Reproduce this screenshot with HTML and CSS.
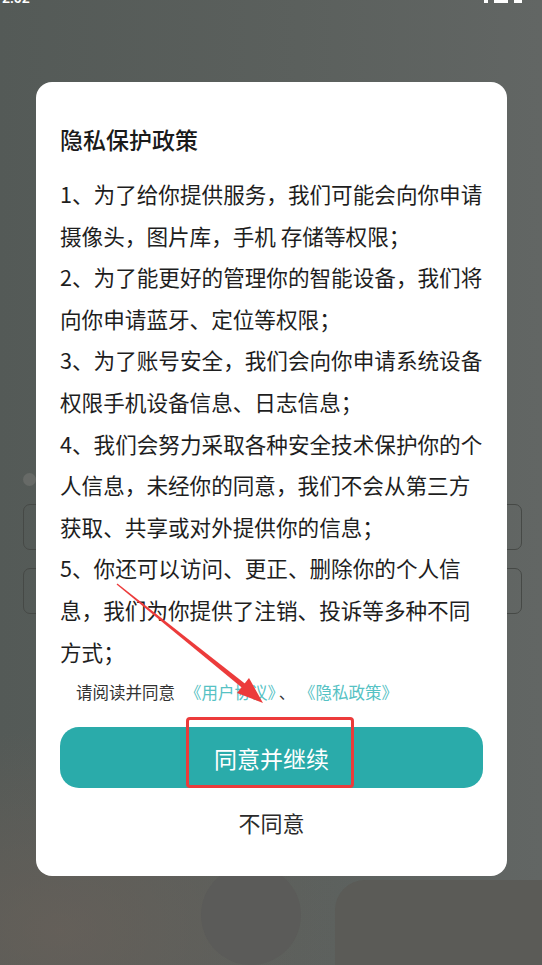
FILE: index.html
```html
<!DOCTYPE html>
<html lang="zh-CN">
<head>
<meta charset="utf-8">
<title>隐私保护政策</title>
<link rel="stylesheet" href="styles.css">
</head>
<body>
<div class="page">
  <div class="status">
    <div class="status-inner">
      <span class="time">2:02</span>
      <span class="icons"><i class="bar b1"></i><i class="bar b2"></i><i class="bat"></i></span>
    </div>
  </div>
  <div class="bg-content">
    <div class="dot"></div>
    <div class="field f1"></div>
    <div class="field f2"></div>
    <div class="bottom-row">
      <div class="round"></div>
    </div>
  </div>
  <div class="bg-shape"></div>

  <div class="modal">
    <h1 class="title">隐私保护政策</h1>
    <div class="body">
      <p>1、为了给你提供服务，我们可能会向你申请<br>摄像头，图片库，手机 存储等权限；</p>
      <p>2、为了能更好的管理你的智能设备，我们将<br>向你申请蓝牙、定位等权限；</p>
      <p>3、为了账号安全，我们会向你申请系统设备<br>权限手机设备信息、日志信息；</p>
      <p>4、我们会努力采取各种安全技术保护你的个<br>人信息，未经你的同意，我们不会从第三方<br>获取、共享或对外提供你的信息；</p>
      <p>5、你还可以访问、更正、删除你的个人信<br>息，我们为你提供了注销、投诉等多种不同<br>方式；</p>
    </div>
    <div class="agree">请阅读并同意<span class="link l1">《用户协议》</span><span class="sep">、</span><span class="link">《隐私政策》</span></div>
    <button class="btn-primary">同意并继续</button>
    <div class="btn-text">不同意</div>
  </div>

  <div class="mark-box"></div>
  <svg class="mark-arrow" width="542" height="965" viewBox="0 0 542 965">
    <polygon points="116.6,584.6 244.8,689.9 248.0,686.0 117.4,583.6" fill="#ec3b3b"/>
    <polygon points="263,703 237.0,693.0 249.0,678.0" fill="#ec3b3b"/>
  </svg>
</div>
</body>
</html>
```

FILE: styles.css
```css
* { box-sizing: border-box; margin: 0; padding: 0; }
html, body { width: 542px; height: 965px; overflow: hidden; }
body {
  font-family: "Noto Sans CJK SC", "Noto Sans", sans-serif;
  background: #5a5e5b;
}
.page {
  position: relative;
  width: 542px;
  height: 965px;
  overflow: hidden;
  background:
    radial-gradient(ellipse 300px 200px at 60px 930px, rgba(110,98,90,0.6), rgba(110,98,90,0) 100%),
    linear-gradient(90deg, #545a57 0%, #5b605d 55%, #626664 100%);
}
.status { height: 3px; overflow: hidden; }
.status-inner {
  display: flex;
  justify-content: space-between;
  align-items: flex-end;
  height: 3px;
  padding: 0 20px 0 2px;
}
.time { color: #fff; font: 600 14px/14px "Roboto", sans-serif; margin-bottom: -2px; }
.icons { display: flex; gap: 6px; align-items: flex-end; }
.bar { display: block; width: 4px; height: 3px; background: #fff; }
.bar.b2 { width: 14px; }
.bat { display: block; width: 8px; height: 3px; background: #fff; }

.bg-content {
  display: flex;
  flex-direction: column;
  padding: 0 20px 0 23px;
}
.dot {
  width: 13px; height: 13px; border-radius: 50%;
  background: #676a67;
  margin-top: 470px;
}
.field {
  height: 46px;
  border: 1px solid #464946;
  border-radius: 7px;
}
.f1 { margin-top: 18px; }
.f2 { margin-top: 18px; }
.bottom-row { display: flex; padding-left: 178px; margin-top: 251px; }
.round {
  width: 100px; height: 100px; border-radius: 50%;
  background: #5b5b59;
}
.bg-shape {
  position: absolute;
  left: 335px; top: 880px; width: 260px; height: 120px;
  background: #5b5b57;
  border-radius: 30px 0 0 0;
}

.modal {
  position: absolute;
  left: 36px; top: 82px;
  width: 471px; height: 794px;
  background: #fff;
  border-radius: 16px;
  padding: 41px 24px 0 24px;
  display: flex;
  flex-direction: column;
}
.title {
  font-size: 23px;
  font-weight: 500;
  line-height: 32px;
  color: #1a1a1a;
}
.body {
  margin-top: 18px;
  font-size: 21.6px;
  line-height: 41.6px;
  color: #1e1e1e;
  white-space: nowrap;
}
.agree {
  margin-top: 8px;
  padding-left: 16px;
  font-size: 16.5px;
  line-height: 24px;
  color: #333;
  white-space: nowrap;
}
.link { color: #56c2c4; }
.l1 { margin-left: 10px; }
.sep { margin: 0 12px 0 3px; }
.btn-primary {
  margin-top: 23px;
  height: 61px;
  width: 100%;
  border: none;
  border-radius: 19px;
  background: #2aabaa;
  color: #fff;
  font-family: inherit;
  font-size: 23px;
}
.btn-text {
  margin-top: 19px;
  text-align: center;
  font-size: 22px;
  line-height: 30px;
  color: #2b2b2b;
}
.mark-box {
  position: absolute;
  left: 186px; top: 717px;
  width: 168px; height: 71px;
  border: 3px solid #ec3b3b;
  border-radius: 4px;
}
.mark-arrow { position: absolute; left: 0; top: 0; }
```
